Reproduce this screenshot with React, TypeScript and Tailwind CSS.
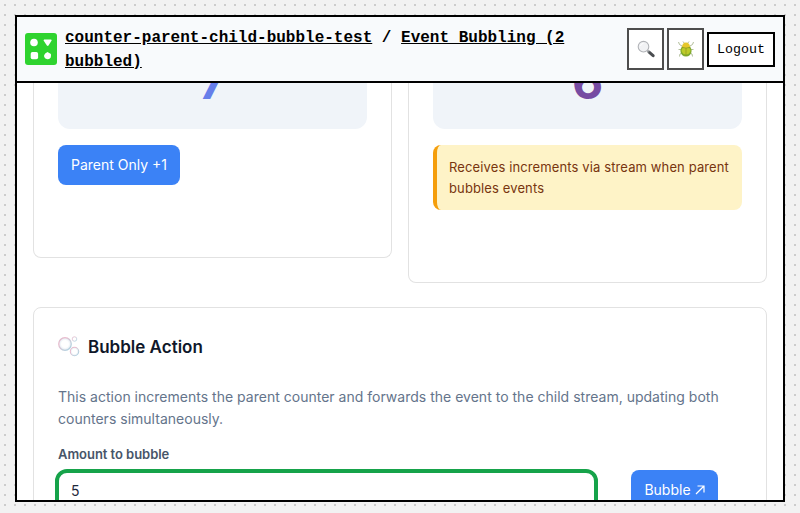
import React from "react";

function Logo() {
  return (
    <svg viewBox="0 0 32 32" className="size-8 shrink-0">
      <rect width="32" height="32" rx="3" fill="#2fd32f" />
      <g fill="#fff">
        <circle cx="9" cy="9.5" r="3.8" />
        <path d="M19.2 6.500H26q1 .2.5 1.200l-3 4.800q-.8.9-1.600 0l-3.200-4.800q-.3-1 .5-1.200z" />
        <rect x="5.700" y="19" width="7.400" height="7.200" rx="1.800" />
        <path d="M22.500 19l1.700 1 1.700.9.1 1.800-.4 2-1.500 1.300-1.800.2-1.900-.6-1.200-1.500-.1-1.900 1.100-1.800z" />
      </g>
    </svg>
  );
}

function Magnifier() {
  return (
    <svg viewBox="0 0 18 18" className="size-[18px]">
      <path d="M12.100 12.200l4 3.500" stroke="#4a4d50" strokeWidth="3" strokeLinecap="round" />
      <path d="M10.300 10.400l1.900 1.800" stroke="#85898d" strokeWidth="1.500" />
      <circle cx="6.500" cy="6.700" r="5.300" fill="#f1f2f4" stroke="#b2b4b8" strokeWidth="1.100" />
      <path d="M3.500 6a3 3 0 0 1 3-2.600" stroke="#fff" fill="none" />
    </svg>
  );
}

function Beetle() {
  return (
    <svg viewBox="0 0 18 18" className="size-[18px]">
      <path
        fill="none"
        stroke="#a8b68f"
        strokeWidth=".9"
        d="M5 6L2.500 4.500 1.500 2M13 6l2.500-1.500 1-2.500M4 9.500H1.500M14 9.500h2.500M5 13l-2 1-.5 2.500M13 13l2 1 .5 2.500M7.500 3.500L6 1.500M10.500 3.500L12 1.500"
      />
      <ellipse cx="9" cy="10.800" rx="5.600" ry="5.800" fill="#7faa2c" />
      <ellipse cx="9" cy="10.500" rx="4.400" ry="4" fill="#bdcb29" />
      <path d="M5 7Q5.300 2.500 9 2.500T13 7q-4 1.500-8 0z" fill="#e6c72c" />
      <path d="M9 8v8M4.500 7.200q4.500 1.800 9 0" stroke="#8a8f1c" strokeWidth=".6" fill="none" />
    </svg>
  );
}

function Bubbles() {
  return (
    <svg viewBox="0 0 22 22" className="h-[22px] w-[22px]" fill="none">
      <defs>
        <linearGradient id="film" x1="0" y1="0" x2="1" y2="1">
          <stop stopColor="#c9bfcc" />
          <stop offset=".25" stopColor="#efb9cc" />
          <stop offset=".6" stopColor="#c6ccd9" />
          <stop offset="1" stopColor="#a9d3e4" />
        </linearGradient>
        <radialGradient id="shade">
          <stop offset=".55" stopColor="#fff" />
          <stop offset="1" stopColor="#dfe8f0" />
        </radialGradient>
      </defs>
      <g stroke="url(#film)" fill="url(#shade)">
        <circle cx="7" cy="8" r="6.300" strokeWidth="1.200" />
        <circle cx="16.500" cy="15.500" r="4.200" strokeWidth="1.100" />
        <circle cx="16.500" cy="3" r="2.300" strokeWidth=".7" />
      </g>
    </svg>
  );
}

function Header() {
  return (
    <header className="relative flex h-[66px] shrink-0 items-center border-b-2 border-black bg-[#f8fafc] px-2 font-['Liberation_Mono','Courier_New',monospace] text-black">
      <Logo />
      <div className="ml-2 w-[530px] pt-0.5 text-base leading-6 font-bold">
        <a className="underline">counter-parent-child-bubble-test</a> / <a className="underline">Event Bubbling (2 bubbled)</a>
      </div>
      <div className="ml-auto flex items-center gap-[3px]">
        <button className="flex h-[42px] w-[37px] items-center justify-center border-2 border-[#4d4d4d] bg-white"><Magnifier /></button>
        <button className="flex h-[42px] w-[37px] items-center justify-center border-2 border-[#4d4d4d] bg-white"><Beetle /></button>
        <button className="h-[35px] w-[68px] border-2 border-black bg-white pt-0.5 text-[13.333px]">Logout</button>
      </div>
    </header>
  );
}

export default function App() {
  return (
    <div className="h-[513px] bg-[#f2f2f2] bg-[radial-gradient(circle,#ccc_1px,transparent_1px)] bg-[length:10px_10px] px-[15px] pt-[15px] font-['Inter',sans-serif]">
      <div className="flex h-[487px] flex-col overflow-hidden border-2 border-black bg-white">
        <Header />
        <main className="flex min-h-0 flex-1 flex-col overflow-hidden px-4">
          <div className="flex shrink-0 items-start gap-4">
            <section className="h-[175px] flex-1 rounded-b-lg border border-t-0 border-[#e2e2e2] px-6">
              <div className="flex h-[46px] items-end justify-center overflow-hidden rounded-b-xl bg-[#f0f4f9] pb-[23px] text-5xl leading-[48px] font-bold text-[#667eea]">7</div>
              <button className="mt-4 block h-10 w-[122px] rounded-lg bg-[#3b82f6] text-sm text-white">Parent Only +1</button>
            </section>
            <section className="h-[200px] flex-1 rounded-b-lg border border-t-0 border-[#e2e2e2] px-6">
              <div className="flex h-[46px] items-end justify-center overflow-hidden rounded-b-xl bg-[#f0f4f9] pb-[23px] text-5xl leading-[48px] font-bold text-[#764ba2]">6</div>
              <p className="mt-4 h-[65px] rounded-lg border-l-4 border-[#f59e0b] bg-[#fef3c7] py-3 pl-3 text-[13px] leading-[21px] tracking-[0.12px] text-[#78350f]">
                Receives increments via stream when parent<br />bubbles events
              </p>
            </section>
          </div>
          <section className="mt-6 h-[260px] shrink-0 rounded-lg border border-[#e2e2e2] px-6 pt-[27px]">
            <h2 className="flex h-6 items-center gap-2 text-[17px] font-semibold text-[#0f172a]"><Bubbles /><span className="pt-0.5">Bubble Action</span></h2>
            <p className="mt-[27px] text-sm leading-[22px] tracking-[0.012px] text-[#64748b]">
              This action increments the parent counter and forwards the event to the child stream, updating both<br />counters simultaneously.
            </p>
            <label className="mt-[14px] block text-[13px] leading-5 font-semibold tracking-[-0.04px] text-[#475569]">Amount to bubble</label>
            <div className="mt-[5px] -ml-[3px] flex items-start">
              <div className="h-[46px] w-[543px] rounded-xl border-4 border-[#16a34a] pt-[7px] pl-3 text-sm leading-[22px] text-[#1e293b]">5</div>
              <button className="mt-px ml-[33px] flex h-10 w-[87px] items-center justify-center gap-1 rounded-lg bg-[#3b82f6] text-sm text-white">
                Bubble
                <svg viewBox="0 0 10 10" className="size-2.5" fill="none" stroke="currentColor" strokeWidth="1.200"><path d="M1 9L9 1M2.500 1H9v6.500" /></svg>
              </button>
            </div>
          </section>
        </main>
      </div>
    </div>
  );
}
